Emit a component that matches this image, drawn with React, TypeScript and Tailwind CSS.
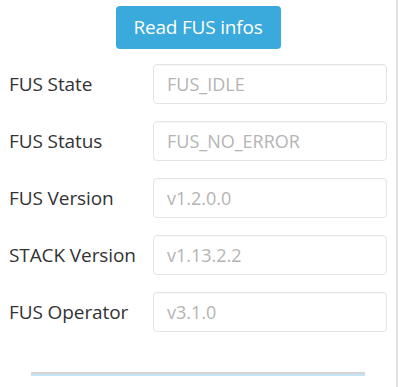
import React from "react";

const rows = [
  ["FUS State", "FUS_IDLE"],
  ["FUS Status", "FUS_NO_ERROR"],
  ["FUS Version", "v1.2.0.0"],
  ["STACK Version", "v1.13.2.2"],
  ["FUS Operator", "v3.1.0"],
];

export default function App() {
  return (
    <div
      className="w-[398px] h-[387px] bg-white flex"
      style={{ fontFamily: '"Open Sans", "Noto Sans", sans-serif' }}
    >
      <div className="w-[396px] flex flex-col">
        <div className="flex justify-center pt-[6px]">
          <button className="w-[165px] h-[43px] rounded-[4px] bg-[#3aa9dc] text-white text-[19px] leading-none tracking-[-0.2px]">
            Read FUS infos
          </button>
        </div>
        <div className="flex flex-col gap-[17px] mt-[15px]">
          {rows.map(([label, value]) => (
            <div key={label} className="flex items-center h-[40px]">
              <div className="w-[153px] pl-[9px] text-[19px] text-[#333] tracking-[-0.1px]">
                {label}
              </div>
              <div className="w-[234px] h-[40px] border border-[#e4e4e4] rounded-[4px] flex items-center pl-[13px] text-[18px] text-[#b4b4b4] shadow-[inset_0_1px_1px_rgba(0,0,0,0.03)]">
                {value}
              </div>
            </div>
          ))}
        </div>
        <div className="mt-[40px] ml-[31px] w-[334px] h-[4px] border-t-2 border-[#d4d4d4] bg-[#c2e6f5]" />
      </div>
      <div className="w-[2px] h-full bg-[#e2e2e2]" />
    </div>
  );
}
